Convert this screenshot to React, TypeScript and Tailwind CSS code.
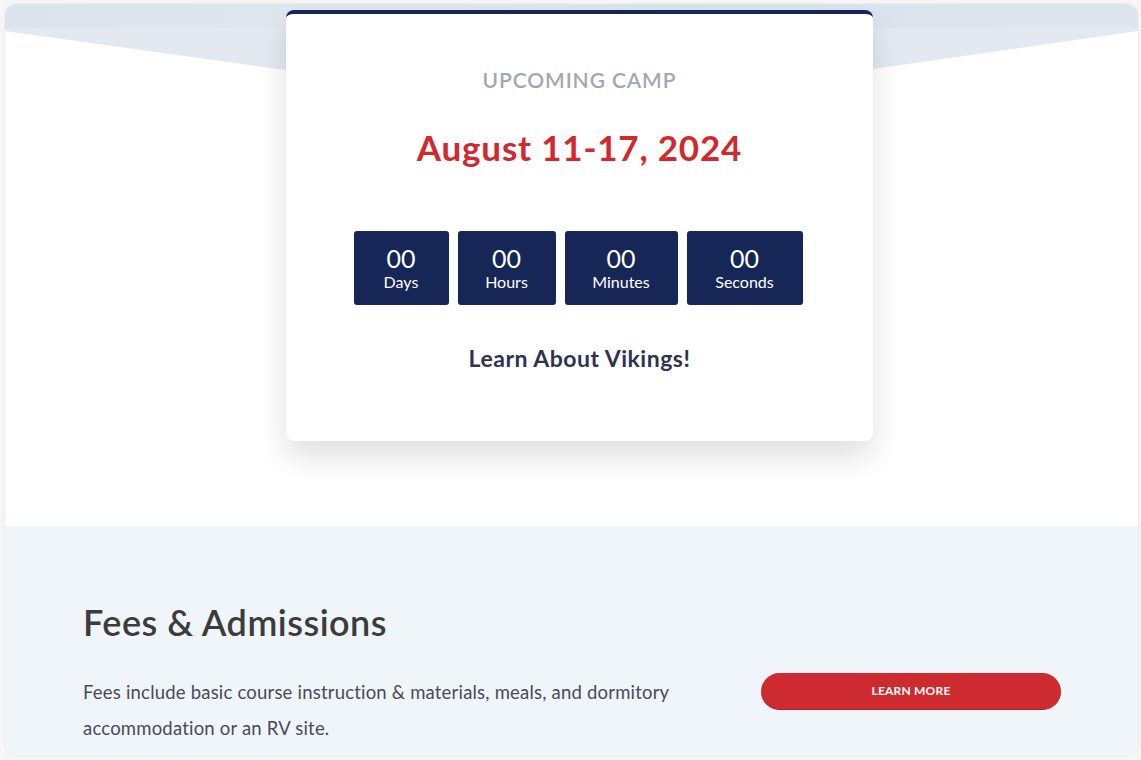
import React from "react";

type Unit = { value: string; label: string; width: string };

const units: Unit[] = [
  { value: "00", label: "Days", width: "w-[95px]" },
  { value: "00", label: "Hours", width: "w-[98px]" },
  { value: "00", label: "Minutes", width: "w-[113px]" },
  { value: "00", label: "Seconds", width: "w-[116px]" },
];

function HeroBackdrop() {
  return (
    <svg
      className="absolute left-0 top-0"
      width="1133"
      height="120"
      viewBox="0 0 1133 120"
    >
      <defs>
        <linearGradient id="strip" x1="0" y1="0" x2="1" y2="0">
          <stop offset="0" stopColor="#dce3ed" />
          <stop offset="0.35" stopColor="#e2e7ef" />
          <stop offset="0.6" stopColor="#dae2ed" />
          <stop offset="1" stopColor="#dfe5ef" />
        </linearGradient>
      </defs>
      <polygon points="0,0 1133,0 1133,27 574,107 0,27" fill="#e3e8f1" />
      <rect x="0" y="0" width="1133" height="24" fill="url(#strip)" />
    </svg>
  );
}

function CountBox({ unit }: { unit: Unit }) {
  return (
    <div
      className={`flex h-[74px] flex-col items-center justify-center rounded-[3px] bg-[#162656] text-white ${unit.width}`}
    >
      <span className="text-[25px] leading-[28px]">{unit.value}</span>
      <span className="text-[16px] leading-[20px]">{unit.label}</span>
    </div>
  );
}

export default function App() {
  return (
    <div
      className="h-[760px] w-[1141px] bg-[#f6f6f6] pl-[5px] pt-[4px]"
      style={{ fontFamily: "Lato, 'Noto Sans', sans-serif" }}
    >
      <div className="h-[752px] w-[1133px] overflow-hidden rounded-[12px] bg-white shadow-[0_0_3px_rgba(0,0,0,0.08)]">
        <section className="relative h-[522px] bg-white pt-[6px]">
          <HeroBackdrop />
          <div className="relative ml-[281px] w-[587px] rounded-[8px] border-t-[4px] border-[#14265a] bg-white pb-[69px] pt-[52px] text-center shadow-[0_16px_30px_rgba(0,0,0,0.12)]">
            <p className="text-[21px] font-semibold uppercase leading-[28px] tracking-[0.9px] text-[#a1a8b2]">
              Upcoming Camp
            </p>
            <h2 className="mt-[33px] text-[35px] font-bold leading-[40px] tracking-[0.8px] text-[#d0292e]">
              August 11-17, 2024
            </h2>
            <div className="mt-[64px] flex justify-center gap-[9px] pr-[3px]">
              {units.map((u) => (
                <CountBox key={u.label} unit={u} />
              ))}
            </div>
            <p className="mt-[39px] text-[23px] font-bold leading-[28px] tracking-[0.5px] text-[#2e3350]">
              Learn About Vikings!
            </p>
          </div>
        </section>
        <section className="h-[230px] bg-[#f0f5f9] pl-[78px] pt-[76px]">
          <h2 className="text-[36px] font-semibold leading-[40px] tracking-[0.5px] text-[#3c3c3f]">
            Fees &amp; Admissions
          </h2>
          <div className="mt-[32px] flex items-start">
            <p className="w-[630px] text-[18.5px] leading-[36px] tracking-[0.2px] text-[#4a4a5a]">
              Fees include basic course instruction &amp; materials, meals, and
              dormitory accommodation or an RV site.
            </p>
            <button
              type="button"
              className="ml-[48px] mt-[-1px] h-[37px] w-[300px] rounded-full border-b border-[#b8232a] bg-[#cd2b30] text-[12px] font-bold uppercase tracking-[0.2px] text-white"
            >
              Learn More
            </button>
          </div>
        </section>
      </div>
    </div>
  );
}
